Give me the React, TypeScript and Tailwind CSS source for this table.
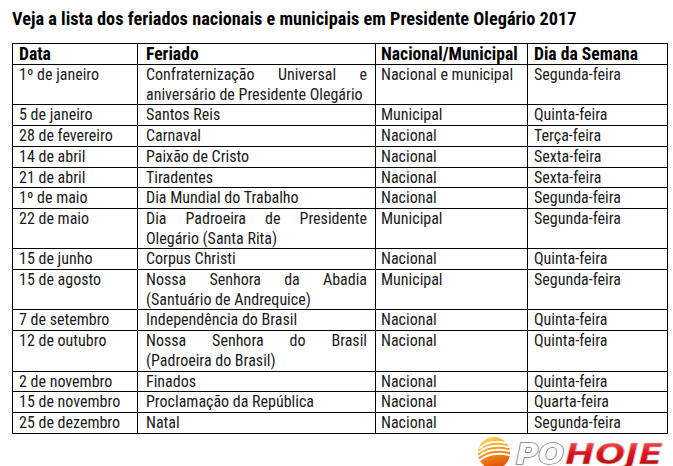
const rows: [string, string[], string, string][] = [
  ['1º de janeiro', ['Confraternização Universal e', 'aniversário de Presidente Olegário'], 'Nacional e municipal', 'Segunda-feira'],
  ['5 de janeiro', ['Santos Reis'], 'Municipal', 'Quinta-feira'],
  ['28 de fevereiro', ['Carnaval'], 'Nacional', 'Terça-feira'],
  ['14 de abril', ['Paixão de Cristo'], 'Nacional', 'Sexta-feira'],
  ['21 de abril', ['Tiradentes'], 'Nacional', 'Sexta-feira'],
  ['1º de maio', ['Dia Mundial do Trabalho'], 'Nacional', 'Segunda-feira'],
  ['22 de maio', ['Dia Padroeira de Presidente', 'Olegário (Santa Rita)'], 'Municipal', 'Segunda-feira'],
  ['15 de junho', ['Corpus Christi'], 'Nacional', 'Quinta-feira'],
  ['15 de agosto', ['Nossa Senhora da Abadia', '(Santuário de Andrequice)'], 'Municipal', 'Segunda-feira'],
  ['7 de setembro', ['Independência do Brasil'], 'Nacional', 'Quinta-feira'],
  ['12 de outubro', ['Nossa Senhora do Brasil', '(Padroeira do Brasil)'], 'Nacional', 'Quinta-feira'],
  ['2 de novembro', ['Finados'], 'Nacional', 'Quinta-feira'],
  ['15 de novembro', ['Proclamação da República'], 'Nacional', 'Quarta-feira'],
  ['25 de dezembro', ['Natal'], 'Nacional', 'Segunda-feira'],
];

function Logo() {
  return (
    <svg width="192" height="34" viewBox="0 0 192 34">
      <defs>
        <linearGradient id="ball" x1="0" y1="0" x2="0.3" y2="1">
          <stop offset="0" stopColor="#ffe066" />
          <stop offset="0.45" stopColor="#f7a21b" />
          <stop offset="1" stopColor="#e0560a" />
        </linearGradient>
        <linearGradient id="hoje" x1="0" y1="0" x2="0" y2="1">
          <stop offset="0" stopColor="#ff6a6a" />
          <stop offset="0.45" stopColor="#e3141c" />
          <stop offset="1" stopColor="#a80a12" />
        </linearGradient>
      </defs>
      <circle cx="18" cy="17" r="16" fill="url(#ball)" />
      <g fill="none" stroke="#fff" strokeWidth="2" strokeLinecap="round">
        <path d="M4 12 Q14 3 30 7" />
        <path d="M3 16 Q14 7 32 11" />
        <path d="M3 20 Q14 11 33 15" />
        <path d="M4 24 Q15 15 33 19" />
      </g>
      <text
        x="40"
        y="28"
        fontFamily="'DejaVu Sans', sans-serif"
        fontWeight="700"
        fontStyle="italic"
        fontSize="29"
        textLength="48"
        lengthAdjust="spacingAndGlyphs"
        fill="#ffffff"
        stroke="#7a7a7a"
        strokeWidth="1.5"
        paintOrder="stroke"
      >
        PO
      </text>
      <text
        x="89"
        y="28"
        fontFamily="'DejaVu Sans', sans-serif"
        fontWeight="900"
        fontStyle="italic"
        fontSize="29"
        textLength="98"
        lengthAdjust="spacingAndGlyphs"
        fill="url(#hoje)"
        stroke="#c9c9c9"
        strokeWidth="0.6"
      >
        HOJE
      </text>
    </svg>
  );
}

export default function App() {
  return (
    <div className="w-[673px] h-[466px] overflow-hidden bg-white font-['Roboto',sans-serif] [font-stretch:87%] text-[#1a1a1a]">
      <h1 className="pl-[12px] pt-[8px] h-[43px] text-[18.3px] leading-[22px] font-bold text-black">
        Veja a lista dos feriados nacionais e municipais em Presidente Olegário 2017
      </h1>
      <table className="ml-[12px] w-[655px] border-collapse table-fixed text-[16px] leading-[19.7px]">
        <colgroup>
          <col className="w-[125px]" />
          <col className="w-[238px]" />
          <col className="w-[152px]" />
          <col className="w-[140px]" />
        </colgroup>
        <thead>
          <tr className="text-black text-[17.6px] leading-[20px]">
            <th className="border border-black px-[6px] text-left font-bold">Data</th>
            <th className="border border-black px-[8px] text-left font-bold">Feriado</th>
            <th className="border border-black px-[5px] text-left font-bold">Nacional/Municipal</th>
            <th className="border border-black px-[6px] text-left font-bold">Dia da Semana</th>
          </tr>
        </thead>
        <tbody>
          {rows.map(([date, lines, tipo, dia]) => (
            <tr key={date}>
              <td className="border border-black px-[6px] align-top">{date}</td>
              <td className="border border-black px-[8px] align-top">
                {lines.map((line, i) => (
                  <div
                    key={i}
                    className={
                      i === 0 && lines.length > 1
                        ? 'text-justify [text-align-last:justify]'
                        : ''
                    }
                  >
                    {line}
                  </div>
                ))}
              </td>
              <td className="border border-black px-[5px] align-top">{tipo}</td>
              <td className="border border-black px-[6px] align-top">{dia}</td>
            </tr>
          ))}
        </tbody>
      </table>
      <div className="flex justify-end pr-[5px] pt-[2px]">
        <Logo />
      </div>
    </div>
  );
}
